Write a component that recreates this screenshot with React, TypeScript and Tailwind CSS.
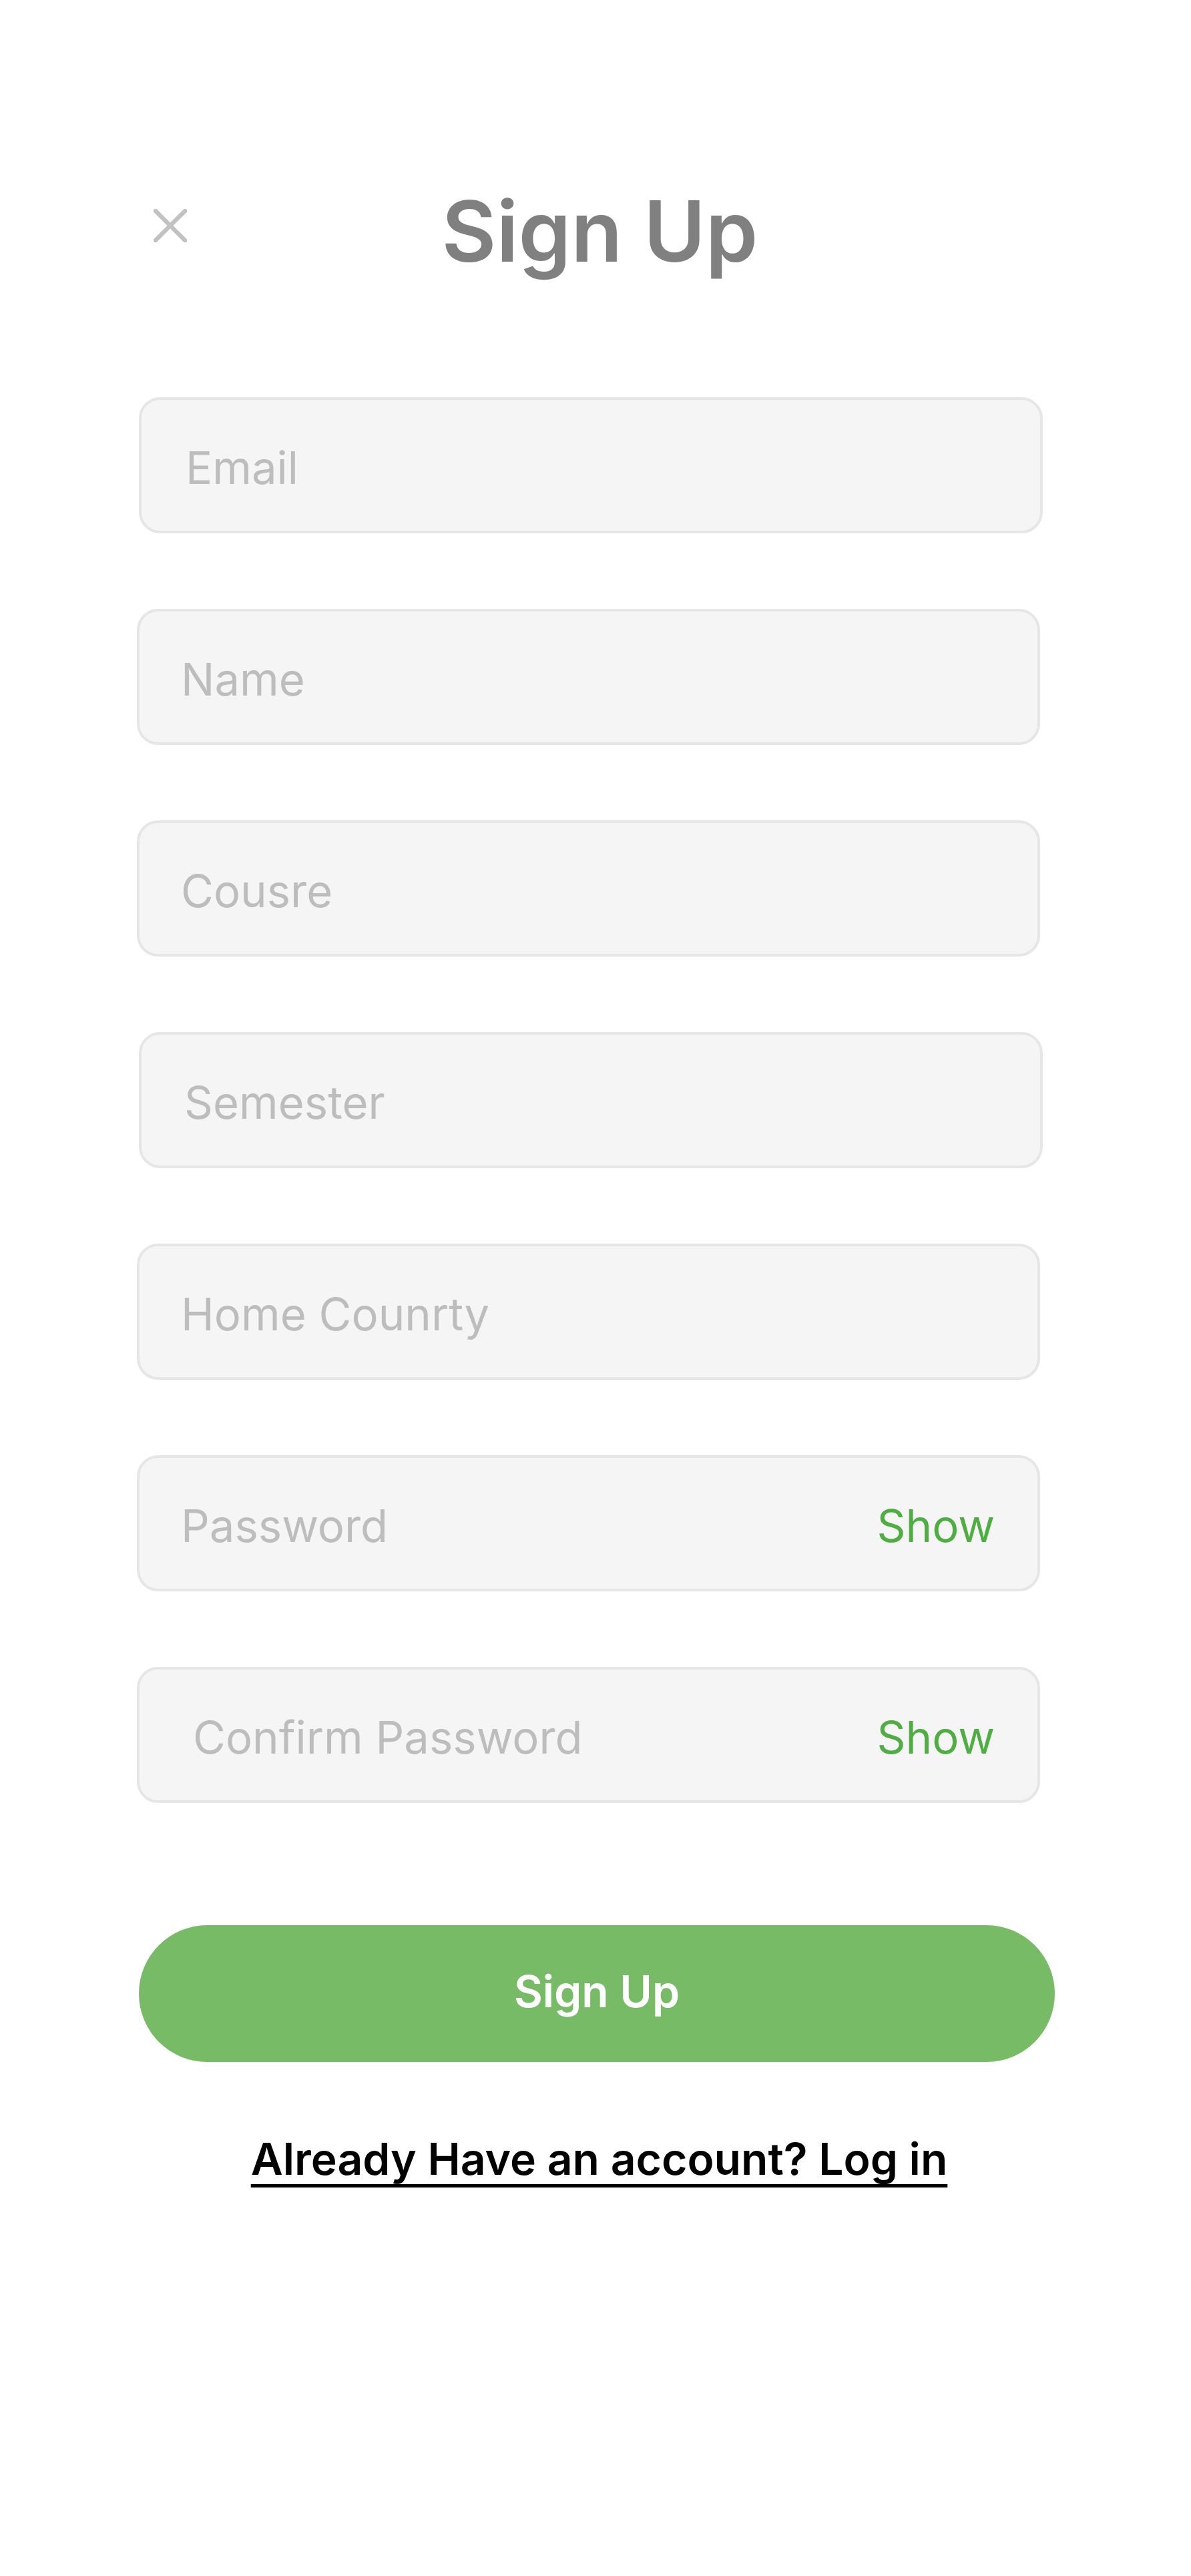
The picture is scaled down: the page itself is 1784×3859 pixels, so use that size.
import { useState } from 'react';

type Field = {
  id: string;
  label: string;
  secret?: boolean;
  /** small per-field nudges, the mockup isn't pixel-aligned */
  box: string;
  pad: string;
};

const FIELDS: Field[] = [
  { id: 'email', label: 'Email', box: 'ml-[3px] w-[1354px]', pad: 'pl-[66px]' },
  { id: 'name', label: 'Name', box: 'w-[1353px]', pad: 'pl-[62px]' },
  { id: 'course', label: 'Cousre', box: 'w-[1353px]', pad: 'pl-[62px]' },
  { id: 'semester', label: 'Semester', box: 'ml-[3px] w-[1354px]', pad: 'pl-[64px]' },
  { id: 'country', label: 'Home Counrty', box: 'w-[1353px]', pad: 'pl-[62px]' },
  { id: 'password', label: 'Password', secret: true, box: 'w-[1353px]', pad: 'pl-[62px]' },
  { id: 'confirm', label: 'Confirm Password', secret: true, box: 'w-[1353px]', pad: 'pl-[80px]' },
];

function CloseIcon() {
  return (
    <svg width="50" height="50" viewBox="0 0 50 50" fill="none" className="shrink-0">
      <path d="M3 3L47 47M47 3L3 47" stroke="#c2c2c2" strokeWidth="6.5" strokeLinecap="round" />
    </svg>
  );
}

function InputRow({ field }: { field: Field }) {
  const [value, setValue] = useState('');
  const [shown, setShown] = useState(false);

  return (
    <div
      className={`flex h-[204px] items-center rounded-[32px] border-4 border-[#e6e6e6] bg-[#f5f5f5] pr-[64px] pt-[6px] ${field.box} ${field.pad}`}
    >
      <input
        value={value}
        onChange={(e) => setValue(e.target.value)}
        type={field.secret && !shown ? 'password' : 'text'}
        placeholder={field.label}
        className="min-w-0 flex-1 bg-transparent text-[67px] leading-none text-[#333] outline-none placeholder:text-[#bdbdbd]"
      />
      {field.secret && (
        <button
          type="button"
          onClick={() => setShown((s) => !s)}
          className="shrink-0 text-[67px] leading-none text-[#4fae42]"
        >
          {shown ? 'Hide' : 'Show'}
        </button>
      )}
    </div>
  );
}

export default function App() {
  return (
    <div className="min-h-[3859px] w-full bg-white font-['Inter','Noto_Sans',sans-serif]">
      <div className="flex flex-col pl-[205px] pt-[283px]">
        <div className="relative flex h-[126px] w-[1375px] items-center justify-center">
          <div className="absolute left-[25px] top-[30px]">
            <CloseIcon />
          </div>
          <h1 className="ml-[12px] text-[126px] font-semibold leading-none text-[#808080]">Sign Up</h1>
        </div>

        <form
          className="mt-[186px] flex flex-col gap-[113px]"
          onSubmit={(e) => e.preventDefault()}
        >
          {FIELDS.map((f) => (
            <InputRow key={f.id} field={f} />
          ))}

          <button
            type="submit"
            className="ml-[3px] mt-[70px] flex h-[205px] w-[1372px] items-center justify-center rounded-full bg-[#78bb67] pb-[6px] text-[66px] font-semibold text-white"
          >
            Sign Up
          </button>
        </form>

        <div className="mt-[112px] flex w-[1375px] justify-center">
          <a
            href="#"
            className="ml-[10px] text-[66px] font-semibold leading-none text-black underline decoration-[5px] underline-offset-[14px]"
          >
            Already Have an account? Log in
          </a>
        </div>
      </div>
    </div>
  );
}
